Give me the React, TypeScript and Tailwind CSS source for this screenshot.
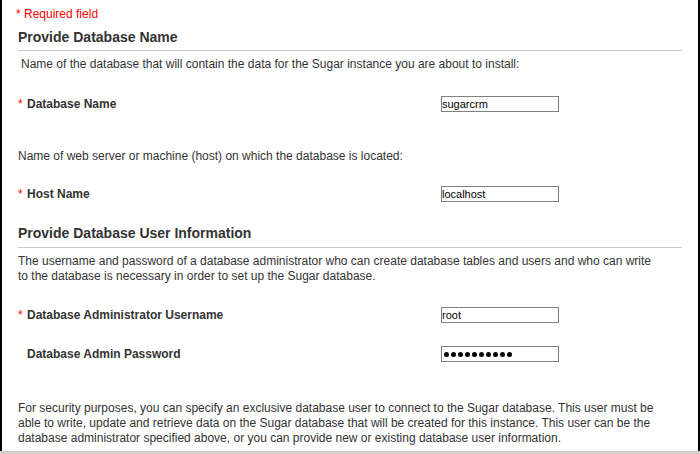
import React from 'react';

type FieldProps = {
  label: string;
  value: string;
  required?: boolean;
  password?: boolean;
  className?: string;
};

function Field({ label, value, required, password, className }: FieldProps) {
  return (
    <div className={`flex items-center h-[16px] ${className ?? ''}`}>
      <div className="w-[423px] flex items-center text-[12px] leading-[15px]">
        {required ? (
          <span className="text-[#ff0000] w-[9px]">*</span>
        ) : (
          <span className="w-[9px]" />
        )}
        <span className="font-bold text-[#333]">{label}</span>
      </div>
      {password ? (
        <div className="w-[118px] h-[16px] border border-[#808080] bg-white flex items-center pl-[2px] gap-[2px]">
          {Array.from({ length: 10 }).map((_, i) => (
            <span key={i} className="w-[5px] h-[5px] rounded-full bg-black" />
          ))}
        </div>
      ) : (
        <input
          readOnly
          defaultValue={value}
          className="w-[118px] h-[16px] border border-[#808080] bg-white px-0 text-[11px] leading-[14px] text-black outline-none font-['Liberation_Sans',Arial,sans-serif]"
        />
      )}
    </div>
  );
}

function Heading({ children, className }: { children: React.ReactNode; className?: string }) {
  return (
    <div className={`border-b border-[#c8c8c8] text-[14px] leading-[17px] font-bold text-[#333] ${className ?? ''}`}>
      {children}
    </div>
  );
}

export default function App() {
  return (
    <div className="w-[700px] h-[454px] overflow-hidden bg-[#d4d0c8] font-['Liberation_Sans',Arial,sans-serif]">
      <div className="h-[451px] border-x-2 border-black bg-white">
        <div className="pt-[7px] pl-[14px] text-[12px] leading-[15px] text-[#ff0000]">* Required field</div>
        <div className="mx-[16px] text-[12px] leading-[15px] text-[#333]">
          <Heading className="mt-[7px] pb-[4px]">Provide Database Name</Heading>
          <p className="mt-[6px] pl-[3px]">
            Name of the database that will contain the data for the Sugar instance you are about to install:
          </p>
          <Field className="mt-[24px]" label="Database Name" value="sugarcrm" required />
          <p className="mt-[37px]">Name of web server or machine (host) on which the database is located:</p>
          <Field className="mt-[22px]" label="Host Name" value="localhost" required />
          <Heading className="mt-[23px] pb-[5px]">Provide Database User Information</Heading>
          <p className="mt-[6px] pr-[20px]">
            The username and password of a database administrator who can create database tables and users and who can write
            to the database is necessary in order to set up the Sugar database.
          </p>
          <Field className="mt-[23px]" label="Database Administrator Username" value="root" required />
          <Field className="mt-[23px]" label="Database Admin Password" value="••••••••••" password />
          <p className="mt-[39px] pr-[6px]">
            For security purposes, you can specify an exclusive database user to connect to the Sugar database. This user must be
            able to write, update and retrieve data on the Sugar database that will be created for this instance. This user can be the
            database administrator specified above, or you can provide new or existing database user information.
          </p>
        </div>
      </div>
    </div>
  );
}
